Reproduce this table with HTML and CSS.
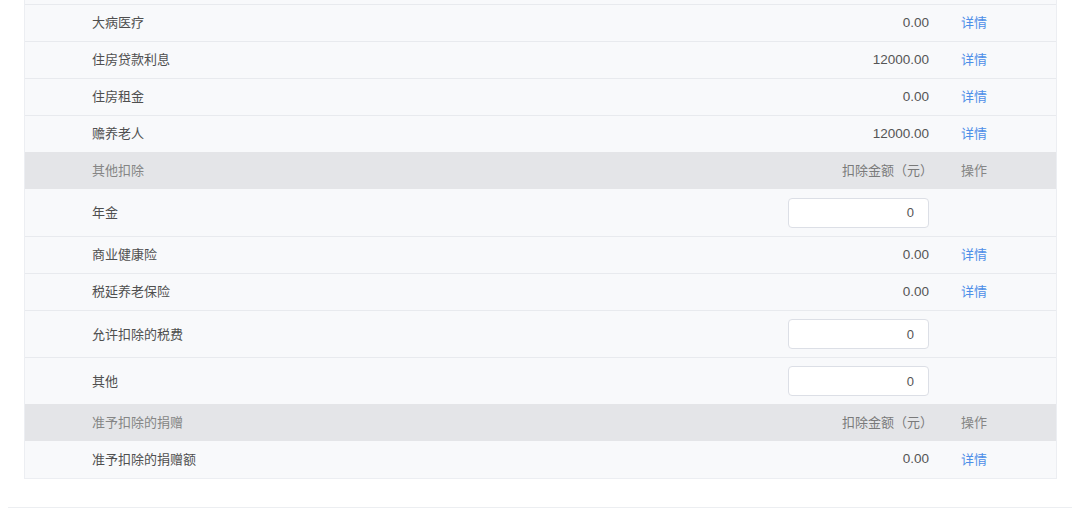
FILE: index.html
```html
<!DOCTYPE html>
<html lang="zh-CN">
<head>
<meta charset="utf-8">
<title>扣除项目</title>
<link rel="stylesheet" href="styles.css">
</head>
<body>
<div class="page">
  <div class="panel">
    <div class="table">
      <div class="cut"></div>
      <div class="row"><div class="label">大病医疗</div><div class="amount">0.00</div><div class="op"><a class="link">详情</a></div></div>
      <div class="row"><div class="label">住房贷款利息</div><div class="amount">12000.00</div><div class="op"><a class="link">详情</a></div></div>
      <div class="row"><div class="label">住房租金</div><div class="amount">0.00</div><div class="op"><a class="link">详情</a></div></div>
      <div class="row"><div class="label">赡养老人</div><div class="amount">12000.00</div><div class="op"><a class="link">详情</a></div></div>
      <div class="row hdr"><div class="label">其他扣除</div><div class="amount">扣除金额（元）</div><div class="op">操作</div></div>
      <div class="row tall"><div class="label">年金</div><div class="amount"><input class="num" type="text" value="0"></div><div class="op"></div></div>
      <div class="row"><div class="label">商业健康险</div><div class="amount">0.00</div><div class="op"><a class="link">详情</a></div></div>
      <div class="row"><div class="label">税延养老保险</div><div class="amount">0.00</div><div class="op"><a class="link">详情</a></div></div>
      <div class="row tall"><div class="label">允许扣除的税费</div><div class="amount"><input class="num" type="text" value="0"></div><div class="op"></div></div>
      <div class="row tall"><div class="label">其他</div><div class="amount"><input class="num" type="text" value="0"></div><div class="op"></div></div>
      <div class="row hdr"><div class="label">准予扣除的捐赠</div><div class="amount">扣除金额（元）</div><div class="op">操作</div></div>
      <div class="row"><div class="label">准予扣除的捐赠额</div><div class="amount">0.00</div><div class="op"><a class="link">详情</a></div></div>
    </div>
  </div>
</div>
</body>
</html>
```

FILE: styles.css
```css
html, body {
  margin: 0;
  padding: 0;
  background: #ffffff;
}
body {
  font-family: "Liberation Sans", "Noto Sans CJK SC", sans-serif;
  font-size: 13px;
  color: #4f4f4f;
  overflow: hidden;
}
.page {
  margin: 0 8px;
}
.panel {
  padding: 0 16px 28px;
  border-bottom: 1px solid #eceef1;
}
.table {
  width: 1033px;
  box-sizing: border-box;
  border: 1px solid #eceef2;
  border-top: none;
  background: #f8f9fb;
}
.cut {
  height: 4px;
}
.row {
  display: flex;
  align-items: center;
  height: 35px;
  padding-bottom: 1px;
  border-top: 1px solid #e8eaee;
  line-height: 1;
}
.row.tall {
  height: 46px;
  padding-bottom: 0;
}
.row.hdr {
  height: 36px;
  border-top: none;
  background: #e4e5e8;
  color: #858585;
}
.hdr + .row {
  border-top: none;
  height: 36px;
}
.hdr + .row.tall {
  height: 47px;
}
.label {
  flex: 1;
  padding-left: 67px;
}
.amount {
  width: 200px;
  display: flex;
  justify-content: flex-end;
  color: #555;
  font-size: 13.5px;
}
.hdr .amount {
  color: #7a7a7a;
  font-size: 13px;
  margin-right: -4px;
}
.op {
  width: 127px;
  padding-left: 32px;
  box-sizing: border-box;
}
.link {
  color: #4d8ee8;
  cursor: pointer;
}
.num {
  width: 141px;
  height: 30px;
  box-sizing: border-box;
  border: 1px solid #dcdfe6;
  border-radius: 4px;
  background: #fff;
  text-align: right;
  padding: 0 14px;
  font-family: "Liberation Sans", "Noto Sans CJK SC", sans-serif;
  font-size: 13px;
  color: #555;
  outline: none;
}
```
